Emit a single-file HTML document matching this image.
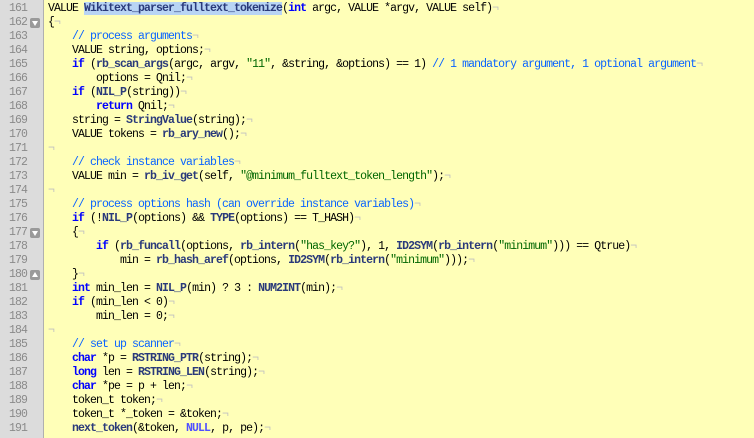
<!DOCTYPE html>
<html><head><meta charset="utf-8"><style>
html,body{margin:0;padding:0;width:754px;height:438px;overflow:hidden;background:#ffffb8;}
#g{position:absolute;left:0;top:0;width:43px;height:438px;background:#dcdcdc;border-right:1px solid #b0b0b0;}
.l{position:absolute;left:0;height:14px;line-height:14px;font:11.5px "Liberation Mono",monospace;letter-spacing:-0.9px;white-space:pre;color:#000;}
.n{position:absolute;left:0;width:27px;text-align:right;height:14px;line-height:14px;font:11.5px "Liberation Mono",monospace;letter-spacing:-0.9px;color:#8a8a8a;}
.f{position:absolute;left:30px;width:10px;height:10px;background:#9a9a9a;border-radius:2px;}
.k{color:#0000ff;font-weight:bold}
.fn{color:#2a3a7a;font-weight:bold}
.s{color:#006600}
.c{color:#0a64ff}
.nl{color:#5050ff;font-weight:bold}
.p{color:#c0c0c0}
.h{background:#b8d4f4}
</style></head><body>
<div id="g"></div>
<div id="code"></div>
<script>
var L=[
'VALUE <span class="h fn">Wikitext_parser_fulltext_tokenize</span>(<span class="k">int</span> argc, VALUE *argv, VALUE self)',
'{',
'    <span class="c">// process arguments</span>',
'    VALUE string, options;',
'    <span class="k">if</span> (<span class="fn">rb_scan_args</span>(argc, argv, <span class="s">"11"</span>, &amp;string, &amp;options) == 1) <span class="c">// 1 mandatory argument, 1 optional argument</span>',
'        options = Qnil;',
'    <span class="k">if</span> (<span class="fn">NIL_P</span>(string))',
'        <span class="k">return</span> Qnil;',
'    string = <span class="fn">StringValue</span>(string);',
'    VALUE tokens = <span class="fn">rb_ary_new</span>();',
'',
'    <span class="c">// check instance variables</span>',
'    VALUE min = <span class="fn">rb_iv_get</span>(self, <span class="s">"@minimum_fulltext_token_length"</span>);',
'',
'    <span class="c">// process options hash (can override instance variables)</span>',
'    <span class="k">if</span> (!<span class="fn">NIL_P</span>(options) &amp;&amp; <span class="fn">TYPE</span>(options) == T_HASH)',
'    {',
'        <span class="k">if</span> (<span class="fn">rb_funcall</span>(options, <span class="fn">rb_intern</span>(<span class="s">"has_key?"</span>), 1, <span class="fn">ID2SYM</span>(<span class="fn">rb_intern</span>(<span class="s">"minimum"</span>))) == Qtrue)',
'            min = <span class="fn">rb_hash_aref</span>(options, <span class="fn">ID2SYM</span>(<span class="fn">rb_intern</span>(<span class="s">"minimum"</span>)));',
'    }',
'    <span class="k">int</span> min_len = <span class="fn">NIL_P</span>(min) ? 3 : <span class="fn">NUM2INT</span>(min);',
'    <span class="k">if</span> (min_len &lt; 0)',
'        min_len = 0;',
'',
'    <span class="c">// set up scanner</span>',
'    <span class="k">char</span> *p = <span class="fn">RSTRING_PTR</span>(string);',
'    <span class="k">long</span> len = <span class="fn">RSTRING_LEN</span>(string);',
'    <span class="k">char</span> *pe = p + len;',
'    token_t token;',
'    token_t *_token = &amp;token;',
'    <span class="fn">next_token</span>(&amp;token, <span class="nl">NULL</span>, p, pe);'
];
var h='';
for(var i=0;i<L.length;i++){
 var t=2+i*14;
 h+='<div class="n" style="top:'+t+'px">'+(161+i)+'</div>';
 h+='<div class="l" style="left:48px;top:'+t+'px">'+L[i]+'<span class="p">¬</span></div>';
}
[1,16].forEach(function(i){h+='<div class="f" style="top:'+(4+i*14)+'px"><svg width="10" height="10" style="display:block"><path d="M2 3h6l-3 5z" fill="#fff"/></svg></div>';});
h+='<div class="f" style="top:'+(4+19*14)+'px"><svg width="10" height="10" style="display:block"><path d="M2 7h6l-3-5z" fill="#fff"/></svg></div>';
document.getElementById('code').innerHTML=h;
</script>
</body></html>
